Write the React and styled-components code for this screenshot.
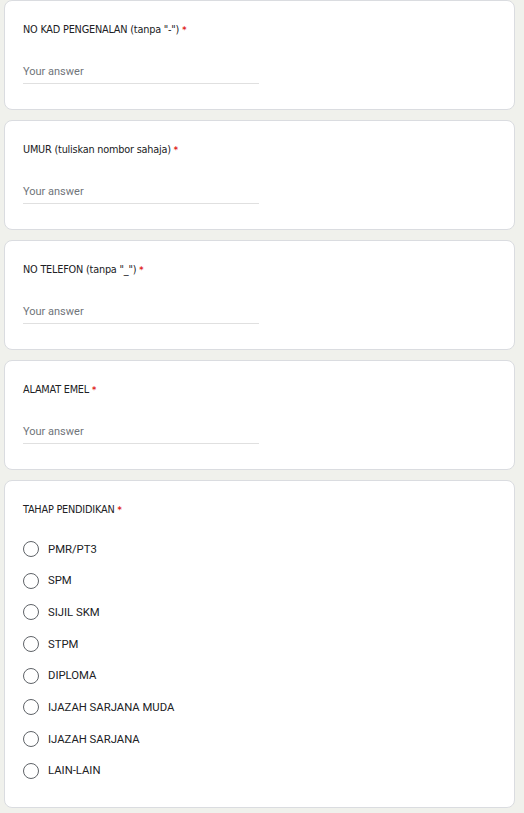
import React from "react";
import styled, { createGlobalStyle } from "styled-components";

const GlobalStyle = createGlobalStyle`
  html, body {
    margin: 0;
    padding: 0;
    background: #f0f1ec;
  }
`;

const Page = styled.div`
  display: flex;
  flex-direction: column;
  gap: 10px;
  padding: 0 9px 0 4px;
  width: 524px;
  box-sizing: border-box;
`;

const Card = styled.div`
  background: #fff;
  border: 1px solid #dadce0;
  border-radius: 8px;
  padding: 21px 18px 0 18px;
  height: ${(p) => p.h}px;
  box-sizing: border-box;
`;

const Title = styled.div`
  font-family: "DejaVu Sans Condensed", "DejaVu Sans", sans-serif;
  font-size: 10.8px;
  color: #202124;
  letter-spacing: -0.2px;
  line-height: 16px;
  span {
    color: #e0241b;
    font-size: 9px;
    font-weight: 700;
    margin-left: 3px;
  }
`;

const Answer = styled.div`
  margin-top: 26px;
  width: 236px;
  border-bottom: 1px solid #e0e0e0;
  padding-bottom: 3px;
  font-family: Roboto, "Liberation Sans", sans-serif;
  font-size: 11px;
  color: #70757a;
  line-height: 16px;
`;

const Options = styled.div`
  display: flex;
  flex-direction: column;
  gap: 13.7px;
  margin-top: 22px;
`;

const Option = styled.label`
  display: flex;
  align-items: center;
  gap: 9px;
  font-family: Roboto, "Liberation Sans", sans-serif;
  font-size: 11.3px;
  color: #202124;
  height: 18px;
`;

const Radio = styled.span`
  width: 14px;
  height: 14px;
  border: 1.5px solid #5f6368;
  border-radius: 50%;
  flex-shrink: 0;
`;

const textQuestions = [
  'NO KAD PENGENALAN (tanpa "-")',
  "UMUR (tuliskan nombor sahaja)",
  'NO TELEFON (tanpa "_")',
  "ALAMAT EMEL",
];

const levels = [
  "PMR/PT3",
  "SPM",
  "SIJIL SKM",
  "STPM",
  "DIPLOMA",
  "IJAZAH SARJANA MUDA",
  "IJAZAH SARJANA",
  "LAIN-LAIN",
];

export default function App() {
  return (
    <>
      <GlobalStyle />
      <Page>
        {textQuestions.map((q) => (
          <Card key={q} h={110}>
            <Title>
              {q}
              <span>*</span>
            </Title>
            <Answer>Your answer</Answer>
          </Card>
        ))}
        <Card h={328}>
          <Title>
            TAHAP PENDIDIKAN<span>*</span>
          </Title>
          <Options>
            {levels.map((l) => (
              <Option key={l}>
                <Radio />
                {l}
              </Option>
            ))}
          </Options>
        </Card>
      </Page>
    </>
  );
}
